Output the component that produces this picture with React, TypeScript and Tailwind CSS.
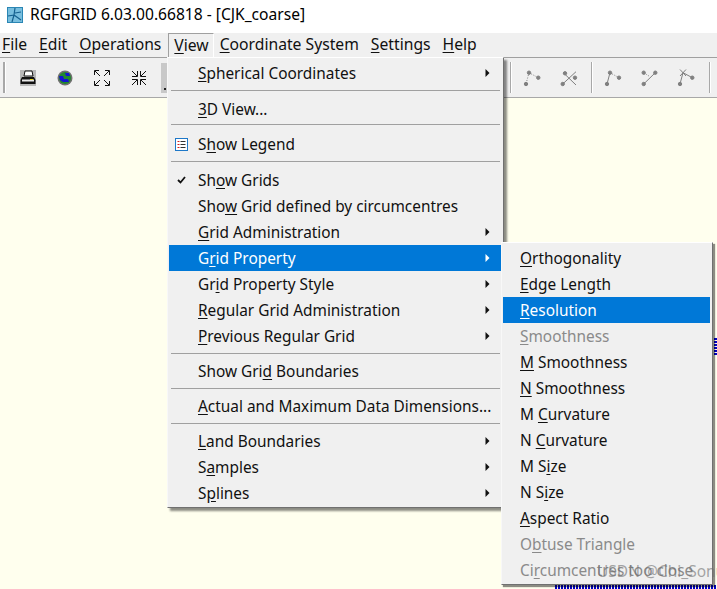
import type { ReactNode } from "react";

type Entry =
  | { sep: "tall" | "top" | "mid" }
  | {
      pre?: string;
      key?: string;
      post?: string;
      arrow?: boolean;
      active?: boolean;
      disabled?: boolean;
      icon?: "check" | "legend";
    };

const viewMenu: Entry[] = [
  { key: "S", post: "pherical Coordinates", arrow: true },
  { sep: "tall" },
  { key: "3", post: "D View..." },
  { sep: "top" },
  { pre: "S", key: "h", post: "ow Legend", icon: "legend" },
  { sep: "tall" },
  { pre: "Sh", key: "o", post: "w Grids", icon: "check" },
  { pre: "Sho", key: "w", post: " Grid defined by circumcentres" },
  { key: "G", post: "rid Administration", arrow: true },
  { pre: "G", key: "r", post: "id Property", arrow: true, active: true },
  { pre: "Gr", key: "i", post: "d Property Style", arrow: true },
  { key: "R", post: "egular Grid Administration", arrow: true },
  { key: "P", post: "revious Regular Grid", arrow: true },
  { sep: "mid" },
  { pre: "Show Gri", key: "d", post: " Boundaries" },
  { sep: "mid" },
  { key: "A", post: "ctual and Maximum Data Dimensions..." },
  { sep: "mid" },
  { key: "L", post: "and Boundaries", arrow: true },
  { pre: "S", key: "a", post: "mples", arrow: true },
  { pre: "S", key: "p", post: "lines", arrow: true },
];

const propertyMenu: Entry[] = [
  { key: "O", post: "rthogonality" },
  { key: "E", post: "dge Length" },
  { key: "R", post: "esolution", active: true },
  { key: "S", post: "moothness", disabled: true },
  { key: "M", post: " Smoothness" },
  { key: "N", post: " Smoothness" },
  { pre: "M ", key: "C", post: "urvature" },
  { pre: "N ", key: "C", post: "urvature" },
  { pre: "M S", key: "i", post: "ze" },
  { pre: "N S", key: "i", post: "ze" },
  { key: "A", post: "spect Ratio" },
  { pre: "O", key: "b", post: "tuse Triangle", disabled: true },
  { pre: "Ci", key: "r", post: "cumcentres too close", disabled: true },
];

function LegendIcon() {
  return (
    <svg width="13" height="13" viewBox="0 0 13 13">
      <rect x="0.5" y="0.5" width="12" height="12" fill="#fff" stroke="#1e78c8" />
      <path d="M2.5 3.5h2M2.5 6.5h2M2.5 9.5h2" stroke="#d02020" />
      <path d="M5.5 3.5h5M5.5 6.5h5M5.5 9.5h5" stroke="#303030" />
    </svg>
  );
}

function CheckIcon() {
  return (
    <svg width="9" height="8" viewBox="0 0 9 8">
      <path d="M1 4l2.5 2.5L8 1" fill="none" stroke="#111" strokeWidth="1.8" />
    </svg>
  );
}

function ArrowIcon({ color }: { color: string }) {
  return (
    <svg width="5" height="8" viewBox="0 0 5 8">
      <path d="M0.5 0v8L4.5 4z" fill={color} />
    </svg>
  );
}

function MenuRows({ items, textLeft, arrowGap }: { items: Entry[]; textLeft: string; arrowGap?: boolean }) {
  return (
    <>
      {items.map((item, i) => {
        if ("sep" in item) {
          const box =
            item.sep === "tall"
              ? "h-[10px] pt-[4px]"
              : item.sep === "top"
                ? "h-[9px] pt-[2px]"
                : "h-[9px] pt-[4px]";
          return (
            <div key={i} className={`${box} px-[2px]`}>
              <div className="h-px w-full bg-[#a0a0a0]" />
            </div>
          );
        }
        const tone = item.active
          ? "bg-[#0078d7] text-white"
          : item.disabled
            ? "text-[#8a8a8a]"
            : "text-[#111]";
        return (
          <div key={i} className={`relative h-[26px] flex items-center ${tone}`}>
            {item.icon && (
              <span className="absolute left-[6px] top-0 h-full flex items-center">
                {item.icon === "legend" ? <LegendIcon /> : <span className="ml-[2px] flex"><CheckIcon /></span>}
              </span>
            )}
            <span className={`${textLeft} pt-[2px] whitespace-pre`}>
              {item.pre}
              <u className="underline-offset-2">{item.key}</u>
              {item.post}
            </span>
            {arrowGap && item.arrow && (
              <span className="absolute right-[12px] top-0 h-full flex items-center">
                <ArrowIcon color={item.active ? "#fff" : "#111"} />
              </span>
            )}
          </div>
        );
      })}
    </>
  );
}

function ToolSep() {
  return <div className="w-px h-[31px] bg-[#a8a8a8] border-r border-white box-content" />;
}

function GreyTool({ children }: { children: ReactNode }) {
  return (
    <svg width="24" height="24" viewBox="0 0 24 24" fill="#808080" stroke="#808080">
      {children}
    </svg>
  );
}

function MenuLabel({ k, rest }: { k: string; rest: string }) {
  return (
    <span className="h-[24px] flex items-center">
      <u className="underline-offset-2">{k}</u>
      {rest}
    </span>
  );
}

export default function App() {
  return (
    <div className="relative w-[717px] h-[589px] overflow-hidden flex flex-col bg-white font-['Noto_Sans',sans-serif] text-[15.4px] leading-none text-[#111]">
      {/* title bar */}
      <div className="h-[33px] flex items-center pl-[7px] pb-[3px] gap-[7px] bg-white">
        <svg width="16" height="16" viewBox="0 0 16 16">
          <rect width="16" height="16" fill="#2a86b4" />
          <rect x="1" y="1" width="14" height="14" fill="#78bede" />
          <path d="M1 9l6-1 1-7M7 8l7 5M8 6l6-1M5 15l2-7" stroke="#15608e" strokeWidth="1.2" fill="none" />
        </svg>
        <span className="text-[15.6px] text-black">RGFGRID 6.03.00.66818 - [CJK_coarse]</span>
      </div>

      {/* menu bar */}
      <div className="h-[25px] flex items-center pl-[2px] text-[15.7px] bg-[#f0f0f0] border-b border-[#a0a0a0]">
        <div className="flex gap-[12px]">
          <MenuLabel k="F" rest="ile" />
          <MenuLabel k="E" rest="dit" />
          <MenuLabel k="O" rest="perations" />
        </div>
        <span className="ml-[7px] h-[24px] pl-[5px] pr-[4px] flex items-center border-t border-l border-r border-t-[#a0a0a0] border-l-[#a0a0a0] border-r-white">
          <u className="underline-offset-2">V</u>iew
        </span>
        <div className="ml-[6px] flex gap-[12px]">
          <MenuLabel k="C" rest="oordinate System" />
          <MenuLabel k="S" rest="ettings" />
          <MenuLabel k="H" rest="elp" />
        </div>
      </div>

      {/* toolbar */}
      <div className="h-[40px] flex items-center bg-[#f0f0f0] border-b border-[#a8a8a8]">
        <div className="ml-[3px] w-[2px] h-[31px] bg-[#a8a8a8] border-r border-white box-content" />
        <div className="ml-[14px] flex items-center gap-[21px]">
          <svg width="16" height="16" viewBox="0 0 16 16">
            <rect width="16" height="16" fill="#b8b8b8" />
            <path d="M5 1h7l1 5H4z" fill="#fff" stroke="#111" />
            <path d="M2 7h12l1.5 3v4H0.5v-4z" fill="#111" />
            <path d="M2 9.5h12v2H2z" fill="#e8e8e8" />
            <rect x="10" y="9" width="3" height="1" fill="#e8d820" />
          </svg>
          <svg width="16" height="16" viewBox="0 0 16 16">
            <circle cx="8" cy="8" r="7.5" fill="#707070" />
            <circle cx="8" cy="8" r="6" fill="#1f8a2c" />
            <path d="M2 6h4l1 3h4l1 3H6L3 10zM8 3h4l1 3H9z" fill="#1414d0" />
          </svg>
          <svg width="16" height="16" viewBox="0 0 16 16" fill="none" stroke="#111">
            <path d="M0.5 5V0.5h4.5M11 0.5h4.5V5M15.5 11v4.5H11M5 15.5H0.5V11M1 1l5 5M15 1l-5 5M15 15l-5-5M1 15l5-5" />
          </svg>
          <svg width="16" height="16" viewBox="0 0 16 16" fill="none" stroke="#111">
            <path d="M6.5 1v5.5H1M9.5 1v5.5H15M9.5 15V9.5H15M6.5 15V9.5H1M6 6L1 1M10 6l5-5M10 10l5 5M6 10l-5 5" />
          </svg>
        </div>
        <div className="ml-[14px] relative w-[6px] h-[30px] bg-[#c8c8c8]">
          <div className="absolute left-[3px] bottom-[3px] w-[2px] h-[2px] bg-[#222]" />
        </div>
        <div className="ml-[343px] flex items-center">
          <ToolSep />
          <div className="ml-[8px] flex items-center gap-[13px]">
            <GreyTool>
              <circle cx="9" cy="6.7" r="1.7" /><circle cx="18.3" cy="11.7" r="1.7" /><circle cx="6" cy="18" r="1.7" />
              <path d="M9 6.7L6 18M9 6.7l9.3 5" strokeDasharray="1 1.5" />
            </GreyTool>
            <GreyTool>
              <circle cx="18" cy="11.7" r="1.7" /><circle cx="5.7" cy="18" r="1.7" /><circle cx="8" cy="7.3" r="1.7" />
              <path d="M6.3 6.7L19 19M19 5.7L5.7 18" />
            </GreyTool>
          </div>
          <div className="ml-[10px]"><ToolSep /></div>
          <div className="ml-[8px] flex items-center gap-[13px]">
            <GreyTool>
              <circle cx="9" cy="6.7" r="1.7" /><circle cx="18" cy="11.7" r="1.7" /><circle cx="6" cy="18" r="1.7" />
              <path d="M9 6.7L6 18" /><path d="M9 6.7l9 5" strokeDasharray="1 1.5" />
            </GreyTool>
            <GreyTool>
              <circle cx="5.7" cy="6.7" r="1.7" /><circle cx="17.3" cy="6.7" r="1.7" /><circle cx="5.7" cy="18" r="1.7" />
              <path d="M17.3 6.7L5.7 18" /><path d="M5.7 6.7l5.5 3.5" strokeDasharray="1 1.5" />
            </GreyTool>
            <GreyTool>
              <circle cx="17.3" cy="11.7" r="1.7" /><circle cx="5" cy="18" r="1.7" />
              <path d="M8 6.7L5 18M8 6.7l9.3 5M5 3.5l6 6.5M11 3.5L5 10" />
            </GreyTool>
          </div>
          <div className="ml-[10px]"><ToolSep /></div>
        </div>
      </div>

      {/* canvas */}
      <div className="relative flex-1 bg-[#ffffee]">
        <div className="absolute left-[714px] top-[239px] w-[3px] h-[18px] bg-[repeating-linear-gradient(0deg,#0000c8_0_2px,#ffffee_2px_3px)]" />
        <div className="absolute left-[555px] bottom-0 w-[162px] h-[4px] bg-[repeating-linear-gradient(90deg,#0000c8_0_2px,#ffffee_2px_3px)]" />
      </div>

      {/* View dropdown */}
      <div className="absolute left-[167px] top-[57px] w-[337px] h-[451px] pt-[2px] px-[1px] bg-[#f0f0f0] border border-t-white border-l-[#f8f8f8] border-r-[#707070] border-b-[#707070] shadow-[3px_3px_2px_rgba(0,0,0,0.45)]">
        <MenuRows items={viewMenu} textLeft="ml-[29px]" arrowGap />
      </div>

      {/* Grid Property submenu */}
      <div className="absolute left-[501px] top-[242px] w-[212px] h-[343px] pt-[2px] pl-[1px] pr-[2px] bg-[#f0f0f0] border border-t-white border-l-[#f8f8f8] border-r-[#707070] border-b-[#707070] shadow-[2px_2px_1px_rgba(0,0,0,0.45)]">
        <MenuRows items={propertyMenu} textLeft="ml-[17px]" />
      </div>

      {/* watermark */}
      <span className="absolute left-[597px] top-[564px] whitespace-nowrap text-[15.5px] text-[rgba(110,110,110,0.6)]">
        USDN @Chi_Sonu
      </span>
    </div>
  );
}
